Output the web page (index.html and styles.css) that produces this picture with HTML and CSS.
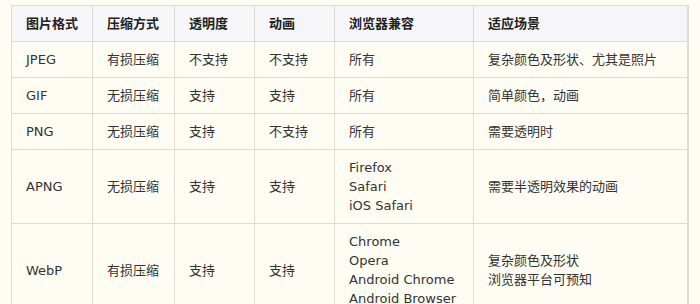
FILE: index.html
```html
<!DOCTYPE html>
<html lang="zh-CN">
<head>
<meta charset="utf-8">
<link rel="stylesheet" href="styles.css">
</head>
<body>
<table class="fmt">
  <colgroup>
    <col class="c1"><col class="c2"><col class="c3"><col class="c4"><col class="c5"><col class="c6">
  </colgroup>
  <thead>
    <tr><th>图片格式</th><th>压缩方式</th><th>透明度</th><th>动画</th><th>浏览器兼容</th><th>适应场景</th></tr>
  </thead>
  <tbody>
    <tr><td>JPEG</td><td>有损压缩</td><td>不支持</td><td>不支持</td><td>所有</td><td>复杂颜色及形状、尤其是照片</td></tr>
    <tr><td>GIF</td><td>无损压缩</td><td>支持</td><td>支持</td><td>所有</td><td>简单颜色，动画</td></tr>
    <tr><td>PNG</td><td>无损压缩</td><td>支持</td><td>不支持</td><td>所有</td><td>需要透明时</td></tr>
    <tr><td>APNG</td><td>无损压缩</td><td>支持</td><td>支持</td><td>Firefox<br>Safari<br>iOS Safari</td><td>需要半透明效果的动画</td></tr>
    <tr><td>WebP</td><td>有损压缩</td><td>支持</td><td>支持</td><td>Chrome<br>Opera<br>Android Chrome<br>Android Browser</td><td>复杂颜色及形状<br>浏览器平台可预知</td></tr>
  </tbody>
</table>
</body>
</html>
```
FILE: styles.css
```css
html, body {
  margin: 0;
  background: #fffdf3;
}
body {
  padding: 5px 0 0 11px;
  font-family: "DejaVu Sans", "Noto Sans CJK SC", sans-serif;
  font-size: 13px;
  color: #333;
}
.fmt {
  border-collapse: collapse;
  table-layout: fixed;
  width: 676px;
  border-right: 2px solid #dcdcd4;
}
.c1 { width: 81px; }
.c2 { width: 82px; }
.c3 { width: 80px; }
.c4 { width: 80px; }
.c5 { width: 139px; }
.c6 { width: 214px; }
.fmt th, .fmt td {
  border: 1px solid #dcdcd4;
  padding: 8px 8px 8px 14px;
  line-height: 19px;
  text-align: left;
  vertical-align: middle;
}
.fmt th {
  background: #f6f6f8;
  font-weight: bold;
  color: #222;
}
.fmt td {
  background: #fffdf3;
}
```
